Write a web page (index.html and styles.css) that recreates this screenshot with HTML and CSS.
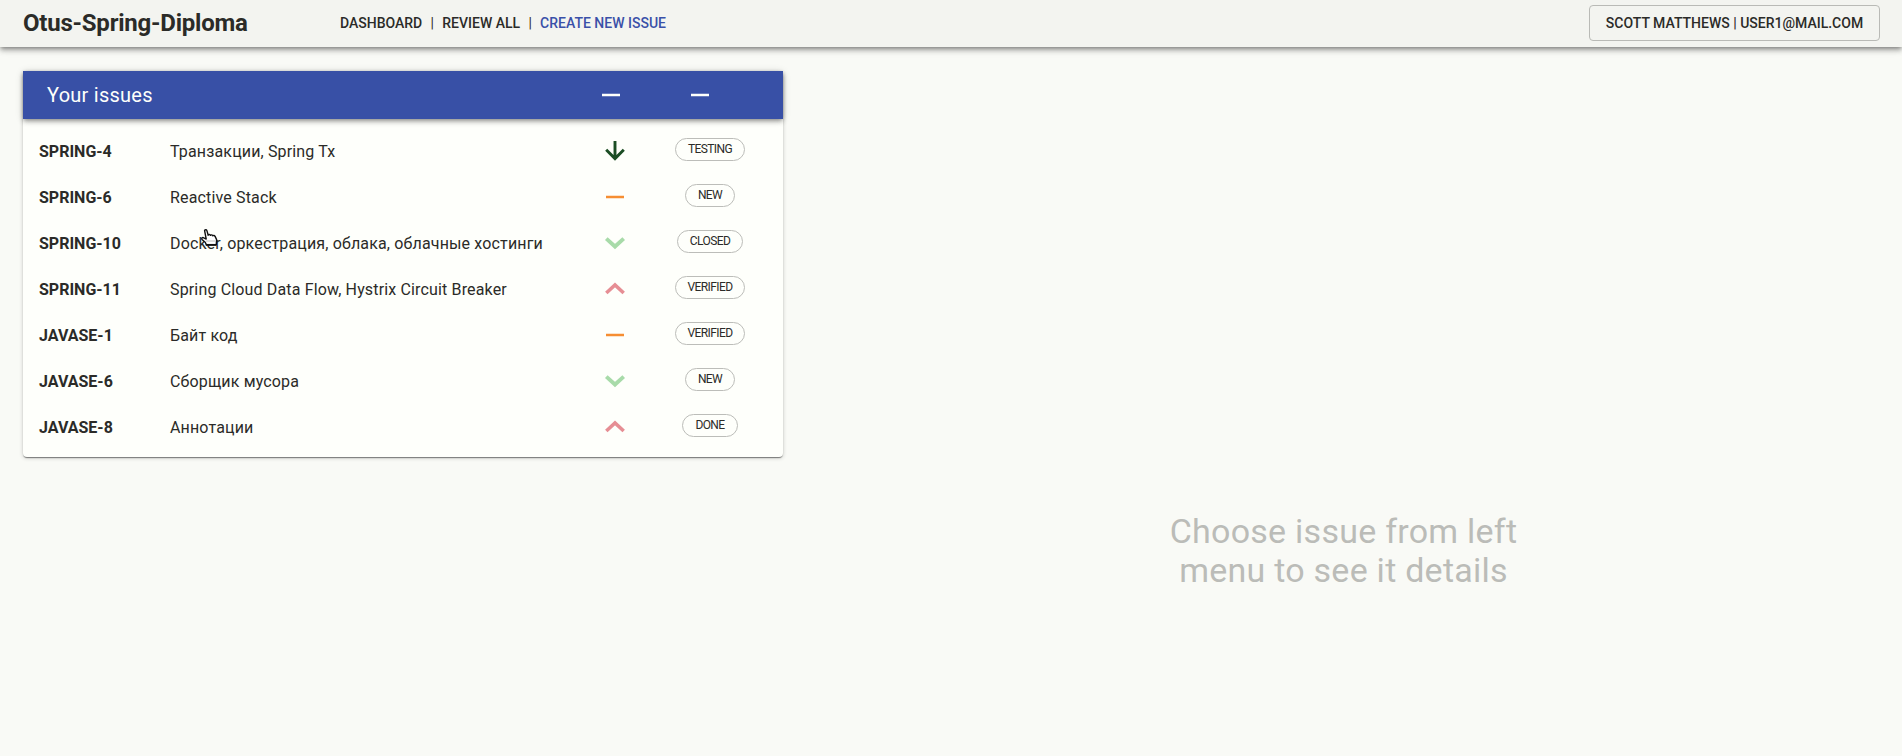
FILE: index.html
```html
<!DOCTYPE html>
<html lang="en">
<head>
<meta charset="utf-8">
<title>Otus-Spring-Diploma</title>
<link rel="stylesheet" href="styles.css">
</head>
<body>
<svg class="defs" width="0" height="0">
  <symbol id="arrow" viewBox="0 0 24 24"><path d="M12 1.9v17.6M3.2 10.8l8.8 8.8 8.8-8.8" fill="none" stroke="currentColor" stroke-width="2.9"/></symbol>
  <symbol id="minus" viewBox="0 0 24 24"><path d="M3 12h18" stroke="currentColor" stroke-width="2.5"/></symbol>
  <symbol id="down" viewBox="0 0 24 24"><path d="M3.3 7.6l8.7 7.9 8.7-7.9" fill="none" stroke="currentColor" stroke-width="3.9"/></symbol>
  <symbol id="up" viewBox="0 0 24 24"><path d="M3.3 16L12 8l8.7 8" fill="none" stroke="currentColor" stroke-width="3.6"/></symbol>
</svg>
<header class="topbar">
  <h1 class="brand">Otus-Spring-Diploma</h1>
  <nav class="nav">
    <a>DASHBOARD</a><span class="sep">|</span><a>REVIEW ALL</a><span class="sep">|</span><a class="create">CREATE NEW ISSUE</a>
  </nav>
  <button class="user">SCOTT MATTHEWS | USER1@MAIL.COM</button>
</header>
<main class="content">
  <section class="card">
    <div class="card-head">
      <h2 class="card-title">Your issues</h2>
      <svg class="icon head-priority"><use href="#minus"/></svg>
      <svg class="icon head-status"><use href="#minus"/></svg>
    </div>
    <ul class="issues">
      <li class="issue"><b class="key">SPRING-4</b><span class="name">Транзакции, Spring Tx</span><svg class="icon lowest"><use href="#arrow"/></svg><span class="status"><span class="chip">TESTING</span></span></li>
      <li class="issue"><b class="key">SPRING-6</b><span class="name">Reactive Stack</span><svg class="icon medium"><use href="#minus"/></svg><span class="status"><span class="chip">NEW</span></span></li>
      <li class="issue"><b class="key">SPRING-10</b><span class="name">Docker, оркестрация, облака, облачные хостинги</span><svg class="icon low"><use href="#down"/></svg><span class="status"><span class="chip">CLOSED</span></span></li>
      <li class="issue"><b class="key">SPRING-11</b><span class="name">Spring Cloud Data Flow, Hystrix Circuit Breaker</span><svg class="icon high"><use href="#up"/></svg><span class="status"><span class="chip">VERIFIED</span></span></li>
      <li class="issue"><b class="key">JAVASE-1</b><span class="name">Байт код</span><svg class="icon medium"><use href="#minus"/></svg><span class="status"><span class="chip">VERIFIED</span></span></li>
      <li class="issue"><b class="key">JAVASE-6</b><span class="name">Сборщик мусора</span><svg class="icon low"><use href="#down"/></svg><span class="status"><span class="chip">NEW</span></span></li>
      <li class="issue"><b class="key">JAVASE-8</b><span class="name">Аннотации</span><svg class="icon high"><use href="#up"/></svg><span class="status"><span class="chip">DONE</span></span></li>
    </ul>
  </section>
  <p class="hint">Choose issue from left<br>menu to see it details</p>
</main>
<svg class="pointer" viewBox="0 0 17 18"><path d="M3.600 1.600C3.600.400 5.600.400 5.900 1.600L7.200 6.200c.4-1 2-.9 2.300.2.500-.9 2-.7 2.300.4.600-.7 1.900-.4 2.300.6l1.500 3.200-.3 5H5.300L4.200 13.300 1 10.400C.3 8.900 1.500 8 2.800 8.800L5.200 10z" fill="#fff" stroke="#111" stroke-width="1.400" stroke-linejoin="round"/><path d="M5.500 12h8.500" stroke="#777" stroke-width="1" stroke-dasharray="1 1"/><path d="M4.800 15.900h10.500" stroke="#111" stroke-width="1.900"/></svg>
</body>
</html>
```
FILE: styles.css
```css
* { box-sizing: border-box; }
body {
  margin: 0;
  height: 756px;
  overflow: hidden;
  display: flex;
  flex-direction: column;
  background: #f9faf6;
  color: #2b2b28;
  font-family: Roboto, sans-serif;
  font-size: 16px;
}
.defs { position: absolute; }
.topbar {
  height: 47px;
  flex: none;
  display: flex;
  align-items: center;
  padding: 0 22px 1px 23px;
  background: #f3f4f0;
  box-shadow: 0 2px 4px -1px rgba(0,0,0,.35), 0 4px 5px rgba(0,0,0,.18), 0 1px 10px rgba(0,0,0,.12);
}
.brand { margin: 0; width: 317px; font-size: 24px; font-weight: 700; letter-spacing: -.22px; line-height: 28px; }
.nav { display: flex; flex: 1; font-size: 14px; font-weight: 500; line-height: 20px; }
.sep { width: 20px; text-align: center; font-weight: 400; }
.create { color: #3a50a8; }
.user {
  width: 291px;
  height: 36px;
  padding: 0;
  border: 1px solid #b9bab6;
  border-radius: 4px;
  background: transparent;
  color: inherit;
  font: 500 14px/20px Roboto, sans-serif;
}
.content { flex: 1; display: flex; align-items: flex-start; padding: 24px 0 0 23px; }
.card {
  width: 760px;
  height: 386px;
  border-radius: 4px;
  background: #fefffb;
  box-shadow: 0 2px 1px -1px rgba(0,0,0,.3), 0 1px 1px rgba(0,0,0,.2), 0 1px 4px rgba(0,0,0,.2);
}
.card-head {
  height: 48px;
  display: flex;
  align-items: center;
  padding-left: 24px;
  background: #3850a6;
  color: #fefffb;
  box-shadow: 0 2px 4px -1px rgba(0,0,0,.3), 0 3px 5px rgba(0,0,0,.16), 0 1px 8px rgba(0,0,0,.14);
}
.card-title { margin: 0; width: 552px; font-size: 20px; font-weight: 400; letter-spacing: .25px; }
.icon { width: 24px; height: 24px; flex: none; }
.head-status { margin-left: 65px; }
.issues { margin: 0; padding: 8px 0; list-style: none; }
.issue { height: 46px; display: flex; align-items: center; padding-left: 16px; }
.issue .icon { margin-top: 2px; }
.key { flex: none; width: 131px; font-weight: 700; line-height: 24px; padding-top: 4px; }
.name { flex: none; width: 433px; line-height: 24px; letter-spacing: .15px; padding-top: 4px; }
.status { margin-left: 42px; width: 82px; display: flex; justify-content: center; padding-bottom: 1px; }
.chip {
  height: 23px;
  padding: 0 12px;
  border: 1px solid #bcbdb9;
  border-radius: 12px;
  font-size: 12px;
  letter-spacing: -.6px;
  line-height: 21px;
}
.lowest { color: #1b4d24; }
.low { color: #a8dba9; }
.medium { color: #f68e32; }
.high { color: #e68e94; }
.hint {
  flex: 1;
  margin: 441px 0 0 2px;
  text-align: center;
  color: #bbbcb8;
  font-size: 34px;
  line-height: 39px;
  letter-spacing: .25px;
}
.pointer { position: absolute; left: 201px; top: 229px; width: 17px; height: 18px; }
```
